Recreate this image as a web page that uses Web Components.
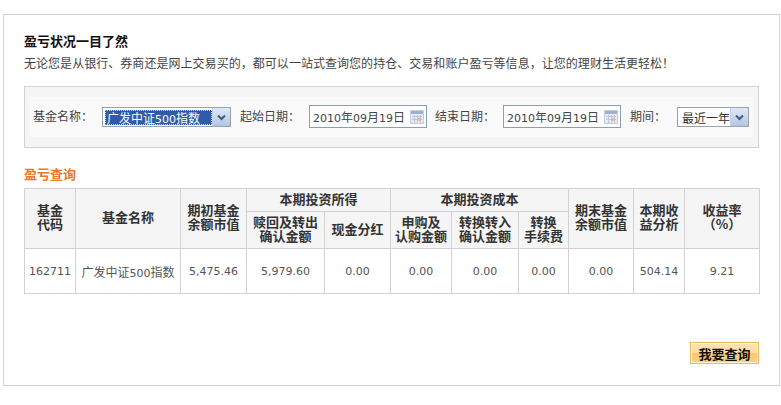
<!DOCTYPE html>
<html lang="zh">
<head>
<meta charset="utf-8">
<title>盈亏查询</title>
<style>
  html, body { margin: 0; background: #fff; }
  body { font: 12px "Noto Sans CJK SC", sans-serif; color: #444; padding: 14px 1px 0 3px; }
</style>
</head>
<body>
<profit-panel>
  <span slot="title">盈亏状况一目了然</span>
  <span slot="desc">无论您是从银行、券商还是网上交易买的，都可以一站式查询您的持仓、交易和账户盈亏等信息，让您的理财生活更轻松！</span>
  <filter-bar slot="filter"></filter-bar>
  <span slot="section">盈亏查询</span>
  <profit-table slot="table"></profit-table>
  <query-button slot="action">我要查询</query-button>
</profit-panel>

<script>
const NUM = 'font:11px "DejaVu Sans",sans-serif;';

class ProfitPanel extends HTMLElement {
    constructor() {
        super();
        this.attachShadow({ mode: 'open' });
        this.shadowRoot.innerHTML = `
      <style>
        :host { display: block; height: 370px; border: 1px solid #d2d2d2; padding: 0 20px; }
        .title { font-size: 13px; font-weight: bold; color: #111; line-height: 18px; padding-top: 17px; }
        .desc { color: #444; line-height: 18px; margin-top: 4px; white-space: nowrap; letter-spacing: 0.04px; }
        .filter { margin-top: 14px; }
        .section { font-size: 13px; font-weight: bold; color: #e67828; line-height: 18px; margin-top: 17px; }
        .table { margin-top: 5px; }
        .action { display: flex; justify-content: flex-end; margin-top: 48px; }
      </style>
      <div class="title"><slot name="title"></slot></div>
      <div class="desc"><slot name="desc"></slot></div>
      <div class="filter"><slot name="filter"></slot></div>
      <div class="section"><slot name="section"></slot></div>
      <div class="table"><slot name="table"></slot></div>
      <div class="action"><slot name="action"></slot></div>
    `;
    }
}

class ComboBox extends HTMLElement {
    constructor() {
        super();
        this.attachShadow({ mode: 'open' });
        this.shadowRoot.innerHTML = `
      <style>
        :host { display: flex; box-sizing: border-box; height: 20px; border: 1px solid #9aa3ab; background: #fff; }
        .value { flex: 1; display: flex; align-items: center; padding: 1px 0 1px 2px; min-width: 0; }
        .text { flex: 1; display: block; line-height: 15px; height: 15px; padding-left: 2px; white-space: nowrap; color: #333; }
        :host([selected]) .text { background: #2f5ba8; color: #fff; outline: 1px dotted #c9d4e8; outline-offset: -1px; }
        .arrow { width: 17px; display: flex; align-items: center; justify-content: center;
                 background: linear-gradient(#dfe8f8, #b3c5e4); border-left: 1px solid #c5d0e4; }
        .n { ${NUM} }
      </style>
      <div class="value"><span class="text"></span></div>
      <div class="arrow"><svg width="9" height="7" viewBox="0 0 9 7"><path d="M1 1.5 4.5 5 8 1.5" fill="none" stroke="#44597f" stroke-width="2"/></svg></div>
    `;
    }

    connectedCallback() {
        this.shadowRoot.querySelector('.text').innerHTML =
            (this.getAttribute('value') || '').replace(/\d+/g, '<span class="n">$&</span>');
    }
}

class DateInput extends HTMLElement {
    constructor() {
        super();
        this.attachShadow({ mode: 'open' });
        this.shadowRoot.innerHTML = `
      <style>
        :host { display: flex; align-items: center; box-sizing: border-box; width: 118px; height: 23px;
                border: 1px solid #8c9fae; background: #fff; padding: 0 2px 0 3px; color: #444; white-space: nowrap; }
        .n { ${NUM} }
        span.v { flex: 1; line-height: 18px; }
        svg { display: block; }
      </style>
      <span class="v"></span>
      <svg width="14" height="14" viewBox="0 0 14 14">
        <rect x="0.5" y="0.5" width="13" height="13" fill="#e6ebf4" stroke="#c3cddd"/>
        <rect x="1" y="1" width="12" height="3" fill="#9db2d3"/>
        <path d="M2 6.5h10M2 9.5h10M4.5 5v8M7.5 5v8M10.5 5v8" stroke="#b7c7e0"/>
        <rect x="8" y="8" width="3" height="3" fill="#e3b7a2"/>
      </svg>
    `;
    }

    connectedCallback() {
        this.shadowRoot.querySelector('.v').innerHTML =
            (this.getAttribute('value') || '').replace(/\d+/g, '<span class="n">$&</span>');
    }
}

class FilterBar extends HTMLElement {
    constructor() {
        super();
        this.attachShadow({ mode: 'open' });
        this.shadowRoot.innerHTML = `
      <style>
        :host { display: block; border: 1px solid #d2d2d2; background: #f5f5f5; padding: 10px 5px; height: 40px; }
        .row { display: flex; align-items: center; height: 40px; background: #fafafa; padding-left: 3px; color: #444; white-space: nowrap; }
        .label { padding-bottom: 3px; }
        .fund { width: 129px; margin: 0 9px; }
        .period { width: 72px; margin-left: 11px; }
        date-input { margin-bottom: 1px; }
        .start { margin: 0 8px 1px 9px; }
        .end { margin: 0 9px 1px 8px; }
      </style>
      <div class="row">
        <span class="label">基金名称：</span>
        <combo-box class="fund" value="广发中证500指数" selected></combo-box>
        <span class="label">起始日期：</span>
        <date-input class="start" value="2010年09月19日"></date-input>
        <span class="label">结束日期：</span>
        <date-input class="end" value="2010年09月19日"></date-input>
        <span class="label">期间：</span>
        <combo-box class="period" value="最近一年"></combo-box>
      </div>
    `;
    }
}

class ProfitTable extends HTMLElement {
    constructor() {
        super();
        this.attachShadow({ mode: 'open' });
        this.shadowRoot.innerHTML = `
      <style>
        :host { display: block; }
        table { border-collapse: collapse; table-layout: fixed; width: 735px; }
        th, td { border: 1px solid #d2d2d2; text-align: center; padding: 0; line-height: 14px; }
        th { background: #f5f5f5; color: #333; font-size: 13px; font-weight: bold; padding-bottom: 3px; }
        td { color: #555; height: 44px; white-space: nowrap; ${NUM} }
        td b { font: 12px "Noto Sans CJK SC", sans-serif; }
        .h1 { height: 23px; }
        .h2 { height: 37px; }
      </style>
      <table>
        <colgroup>
          <col style="width:51px"><col style="width:105px"><col style="width:66px"><col style="width:78px">
          <col style="width:66px"><col style="width:61px"><col style="width:67px"><col style="width:50px">
          <col style="width:65px"><col style="width:51px"><col style="width:75px">
        </colgroup>
        <thead>
          <tr class="h1">
            <th rowspan="2">基金<br>代码</th>
            <th rowspan="2">基金名称</th>
            <th rowspan="2">期初基金<br>余额市值</th>
            <th colspan="2">本期投资所得</th>
            <th colspan="3">本期投资成本</th>
            <th rowspan="2">期末基金<br>余额市值</th>
            <th rowspan="2">本期收<br>益分析</th>
            <th rowspan="2">收益率<br>（%）</th>
          </tr>
          <tr class="h2">
            <th>赎回及转出<br>确认金额</th>
            <th>现金分红</th>
            <th>申购及<br>认购金额</th>
            <th>转换转入<br>确认金额</th>
            <th>转换<br>手续费</th>
          </tr>
        </thead>
        <tbody>
          <tr>
            <td>162711</td>
            <td><b style="font-weight:normal">广发中证</b>500<b style="font-weight:normal">指数</b></td>
            <td>5,475.46</td>
            <td>5,979.60</td>
            <td>0.00</td>
            <td>0.00</td>
            <td>0.00</td>
            <td>0.00</td>
            <td>0.00</td>
            <td>504.14</td>
            <td>9.21</td>
          </tr>
        </tbody>
      </table>
    `;
    }
}

class QueryButton extends HTMLElement {
    constructor() {
        super();
        this.attachShadow({ mode: 'open' });
        this.shadowRoot.innerHTML = `
      <style>
        :host { display: block; }
        .btn { box-sizing: border-box; width: 69px; height: 22px; display: flex; align-items: center; justify-content: center;
               border: 1px solid #e3bb5c; outline: 1px solid #fff2cc; outline-offset: -2px;
               background: linear-gradient(#fde3b4 0, #fddda2 50%, #fcc773 50%, #fdcf85 100%);
               color: #111; font-size: 13px; font-weight: bold; }
      </style>
      <div class="btn"><slot></slot></div>
    `;
    }
}

customElements.define('profit-panel', ProfitPanel);
customElements.define('combo-box', ComboBox);
customElements.define('date-input', DateInput);
customElements.define('filter-bar', FilterBar);
customElements.define('profit-table', ProfitTable);
customElements.define('query-button', QueryButton);
</script>
</body>
</html>
